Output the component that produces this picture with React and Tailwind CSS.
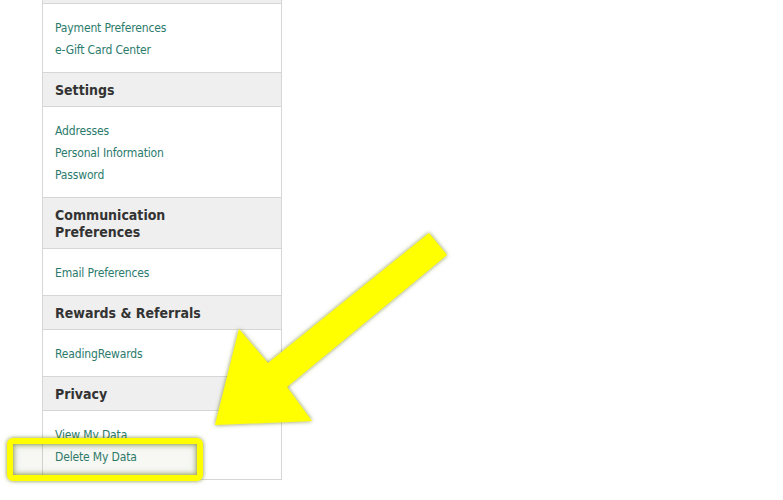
import React from 'react';

const sections = [
  { title: null, links: ['Payment Preferences', 'e-Gift Card Center'] },
  { title: 'Settings', links: ['Addresses', 'Personal Information', 'Password'] },
  { title: ['Communication', 'Preferences'], links: ['Email Preferences'] },
  { title: 'Rewards & Referrals', links: ['ReadingRewards'] },
  { title: 'Privacy', links: ['View My Data', 'Delete My Data'] },
];

function Header({ title }) {
  const lines = Array.isArray(title) ? title : [title];
  return (
    <div className="border-t border-[#d6d6d6] bg-[#efefef] px-3 pt-[9px] pb-[7px]">
      {lines.map((line) => (
        <div key={line} className="text-[14px] leading-[17px] font-bold text-[#333333]">
          {line}
        </div>
      ))}
    </div>
  );
}

function LinkGroup({ links }) {
  return (
    <div className="border-t border-[#d6d6d6] px-3 pt-[13px] pb-[11px]">
      {links.map((link) => (
        <a key={link} href="#" className="block text-[12px] leading-[22px] tracking-[-0.15px] text-[#2b7a6c]">
          {link}
        </a>
      ))}
    </div>
  );
}

function Annotations() {
  return (
    <svg className="absolute left-0 top-0" width="783" height="500" viewBox="0 0 783 500">
      <defs>
        <filter id="glow" x="-20%" y="-20%" width="140%" height="140%">
          <feGaussianBlur in="SourceAlpha" stdDeviation="2" result="blur" />
          <feFlood floodColor="#5d6e10" floodOpacity="0.75" />
          <feComposite in2="blur" operator="in" result="shadow" />
          <feMerge>
            <feMergeNode in="shadow" />
            <feMergeNode in="SourceGraphic" />
          </feMerge>
        </filter>
        <filter id="inner" x="-10%" y="-30%" width="120%" height="160%">
          <feGaussianBlur stdDeviation="2.5" />
        </filter>
      </defs>

      {/* highlight box round "Delete My Data" */}
      <rect x="13" y="444" width="184" height="31" fill="#5d7a30" fillOpacity="0.05" />
      <rect x="14" y="445" width="182" height="29" fill="none" stroke="#51661a" strokeOpacity="0.3" strokeWidth="3" filter="url(#inner)" />
      <rect x="10" y="441" width="190" height="37" rx="3" fill="none" stroke="#ffff00" strokeWidth="6" filter="url(#glow)" />

      {/* arrow */}
      <polygon
        points="429,233 447,255 287,387 312,421 215,425 239,329 268,363"
        fill="#ffff00"
        filter="url(#glow)"
      />
    </svg>
  );
}

export default function App() {
  return (
    <div className="relative w-[783px] h-[500px] overflow-hidden bg-white font-['DejaVu_Sans_Condensed','DejaVu_Sans',sans-serif]">
      <div className="ml-[42px] w-[240px] border-x border-b border-[#d6d6d6]">
        <div className="h-[3px] bg-[#efefef]" />
        {sections.map((s, idx) => (
          <React.Fragment key={idx}>
            {s.title && <Header title={s.title} />}
            <LinkGroup links={s.links} />
          </React.Fragment>
        ))}
      </div>
      <Annotations />
    </div>
  );
}
